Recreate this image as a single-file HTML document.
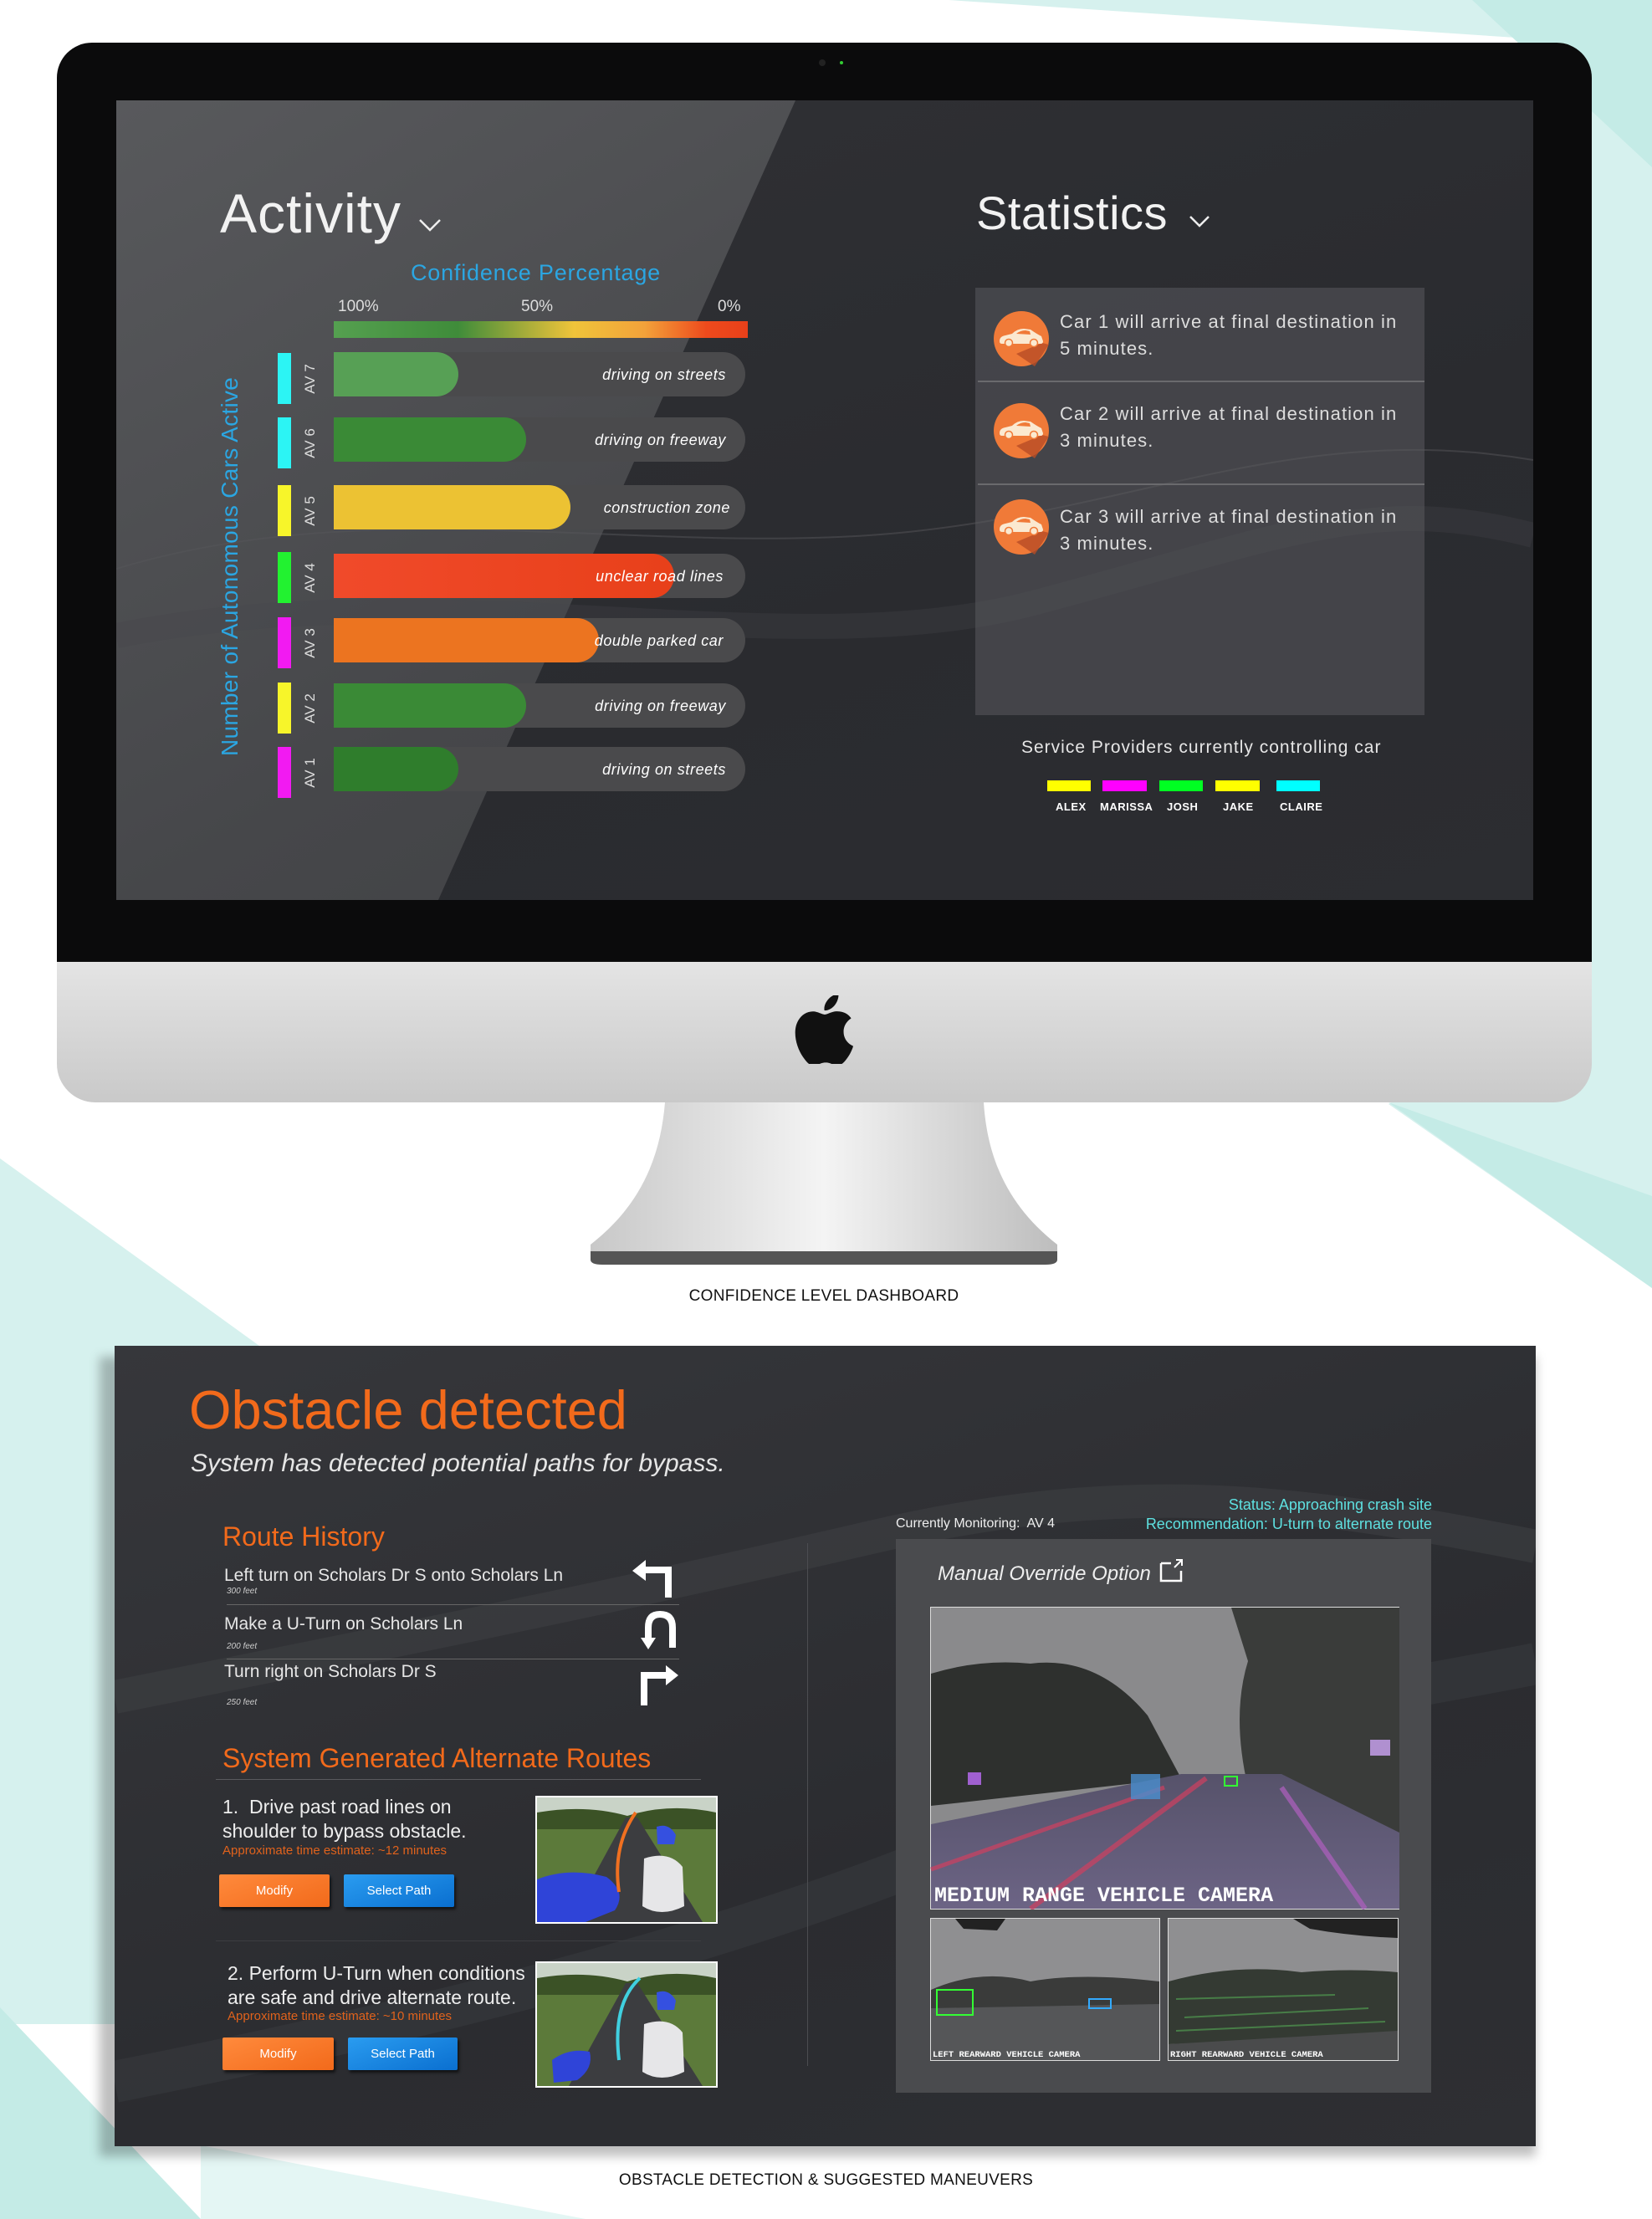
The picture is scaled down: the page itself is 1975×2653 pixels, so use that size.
<!DOCTYPE html>
<html><head><meta charset="utf-8">
<style>
*{margin:0;padding:0;box-sizing:border-box}
body{width:1975px;height:2653px;position:relative;background:#fff;font-family:"Liberation Sans",sans-serif;overflow:hidden}
.a{position:absolute}
.t{position:absolute;white-space:nowrap}
.bar{position:absolute;left:399px;width:492px;height:53px;background:#4a4a4c;border-radius:0 27px 27px 0}
.fill{position:absolute;left:0;top:0;height:53px;border-radius:0 27px 27px 0}
.lbl{position:absolute;right:23px;top:17px;color:#fff;font-style:italic;font-size:18px;letter-spacing:.6px}
.strip{position:absolute;left:332px;width:16px;height:61px}
.av{position:absolute;left:358px;width:26px;height:61px;color:#ddd;font-size:17px}
.av span{position:absolute;left:50%;top:50%;transform:translate(-50%,-50%) rotate(-90deg);white-space:nowrap}
.st{position:absolute;left:1267px;color:#ddd;font-size:22px;letter-spacing:1.1px;line-height:32px}
.circ{position:absolute;left:1188px;width:66px;height:66px;border-radius:50%;background:#f07a38;overflow:hidden}
.sw{position:absolute;top:933px;height:13px}
.nm{position:absolute;top:957px;color:#fff;font-weight:bold;font-size:13px;letter-spacing:.5px}
.btn{position:absolute;height:39px;color:#fff;font-size:15px;text-align:center;line-height:39px;border-radius:2px;box-shadow:2px 3px 3px rgba(0,0,0,.6)}
.or{background:linear-gradient(160deg,#ff8a3c,#f26a1b)}
.bl{background:linear-gradient(160deg,#2a9cf0,#0a6fd0)}
.rt{position:absolute;left:268px;color:#e6e6e6;font-size:21px}
.ft{position:absolute;left:271px;color:#ccc;font-size:10px;font-style:italic}
</style></head><body>
<svg class="a" style="left:0;top:0" width="1975" height="2653">
<polygon points="1134,0 1975,0 1975,1540 1660,1320 1903,1150 1903,51" fill="#d6f1ee"/>
<polygon points="1550,0 1975,0 1975,200 1760,0" fill="#c4ebe6"/>
<polygon points="1660,1318 1975,1430 1975,1540" fill="#c4ebe6"/>
<polygon points="0,1385 310,1609 137,1609 137,2420 0,2420" fill="#d6f1ee"/>
<polygon points="0,2400 240,2653 0,2653" fill="#c4ebe6"/>
<polygon points="240,2565 700,2653 240,2653" fill="#e4f6f4"/>
</svg>

<div class="a" style="left:68px;top:51px;width:1835px;height:1120px;background:#0b0b0c;border-radius:42px 42px 0 0"></div>
<div class="a" style="left:979px;top:71px;width:8px;height:8px;border-radius:50%;background:#222"></div>
<div class="a" style="left:1004px;top:73px;width:4px;height:4px;border-radius:50%;background:#3c3"></div>
<div class="a" style="left:68px;top:1150px;width:1835px;height:168px;background:linear-gradient(#e4e4e4,#c9c9c9);border-radius:0 0 46px 46px"></div>
<svg class="a" style="left:950px;top:1190px" width="72" height="82" viewBox="0 0 170 200">
<path fill="#111" d="M140 106c0-26 21-38 22-39-12-18-31-20-38-20-16-2-31 9-39 9s-21-9-34-9C33 47 17 57 8 73c-19 32-5 80 13 106 9 13 19 27 33 26 13-1 18-9 34-9s20 9 34 8c14 0 23-13 32-26 10-15 14-29 14-30 0 0-28-11-28-42zM114 29c7-9 12-21 11-33-10 0-23 7-30 16-7 8-13 20-11 32 11 1 23-6 30-15z"/>
</svg>
<svg class="a" style="left:700px;top:1318px" width="570" height="200">
<defs><linearGradient id="sg" x1="0" x2="1"><stop offset="0" stop-color="#c8c8c8"/><stop offset=".5" stop-color="#f4f4f4"/><stop offset="1" stop-color="#bdbdbd"/></linearGradient></defs>
<path d="M95 0 L476 0 C480 60 500 120 564 170 L564 185 Q564 192 550 192 L20 192 Q6 192 6 185 L6 170 C70 120 90 60 95 0Z" fill="url(#sg)"/>
<path d="M6 178 L564 178 L564 188 Q564 194 550 194 L20 194 Q6 194 6 188Z" fill="#555"/>
</svg>
<div class="t" style="left:0;width:1970px;text-align:center;top:1539px;font-size:19px;color:#111;letter-spacing:.3px">CONFIDENCE LEVEL DASHBOARD</div>

<div class="a" style="left:139px;top:120px;width:1694px;height:956px;background:linear-gradient(160deg,#303135,#2a2b2f 60%,#2c2d31);overflow:hidden">
<div class="a" style="left:0;top:0;width:1694px;height:956px;background:linear-gradient(150deg,#58595c,#46474a 50%,#3c3d40);clip-path:polygon(0 0,812px 0,385px 956px,0 956px)"></div>
<svg class="a" style="left:0;top:0" width="1694" height="956">
<path d="M0 560 C300 470 600 540 900 520 S1400 380 1694 430" stroke="#55565a" stroke-width="2" fill="none" opacity=".5"/>
<path d="M0 640 C400 560 800 680 1100 600 S1500 470 1694 520" stroke="#46474b" stroke-width="30" fill="none" opacity=".3"/>
</svg>
</div>
<div class="t" style="left:263px;top:217px;font-size:66px;color:#f2f2f2;letter-spacing:1px">Activity</div>
<svg class="a" style="left:500px;top:261px" width="28" height="17"><path d="M2 2 L14 14 L26 2" stroke="#eee" stroke-width="2.5" fill="none"/></svg>
<div class="t" style="left:491px;top:311px;font-size:27px;color:#2ba6e2;letter-spacing:.8px">Confidence Percentage</div>
<div class="t" style="left:404px;top:356px;font-size:19px;color:#ddd">100%</div>
<div class="t" style="left:623px;top:356px;font-size:19px;color:#ddd">50%</div>
<div class="t" style="left:858px;top:356px;font-size:19px;color:#ddd">0%</div>
<div class="a" style="left:399px;top:384px;width:495px;height:20px;background:linear-gradient(90deg,#55a050,#3f8c3a 30%,#f0c43a 58%,#f2a23a 75%,#ee4a1c 90%,#e8401a)"></div>
<div class="t" style="left:259px;top:904px;font-size:28px;color:#2ba6e2;transform:rotate(-90deg);transform-origin:0 0;letter-spacing:.3px">Number of Autonomous Cars Active</div>

<div class="strip" style="top:422px;background:#2cf4f4"></div><div class="av" style="top:422px"><span>AV 7</span></div>
<div class="bar" style="top:421px"><div class="fill" style="width:149px;background:#57a055"></div><div class="lbl">driving on streets</div></div>
<div class="strip" style="top:499px;background:#2cf4f4"></div><div class="av" style="top:499px"><span>AV 6</span></div>
<div class="bar" style="top:499px"><div class="fill" style="width:230px;background:#3a8a36"></div><div class="lbl">driving on freeway</div></div>
<div class="strip" style="top:580px;background:#f7f52a"></div><div class="av" style="top:580px"><span>AV 5</span></div>
<div class="bar" style="top:580px"><div class="fill" style="width:283px;background:#ecc233"></div><div class="lbl" style="right:18px">construction zone</div></div>
<div class="strip" style="top:660px;background:#22f230"></div><div class="av" style="top:660px"><span>AV 4</span></div>
<div class="bar" style="top:662px"><div class="fill" style="width:407px;background:linear-gradient(90deg,#f04a2a,#e8401a)"></div><div class="lbl" style="right:26px">unclear road lines</div></div>
<div class="strip" style="top:738px;background:#f21af2"></div><div class="av" style="top:738px"><span>AV 3</span></div>
<div class="bar" style="top:739px"><div class="fill" style="width:317px;background:#ec7420"></div><div class="lbl" style="right:26px">double parked car</div></div>
<div class="strip" style="top:816px;background:#f7f52a"></div><div class="av" style="top:816px"><span>AV 2</span></div>
<div class="bar" style="top:817px"><div class="fill" style="width:230px;background:#3a8a36"></div><div class="lbl">driving on freeway</div></div>
<div class="strip" style="top:893px;background:#f21af2"></div><div class="av" style="top:893px"><span>AV 1</span></div>
<div class="bar" style="top:893px"><div class="fill" style="width:149px;background:#2f7d2c"></div><div class="lbl">driving on streets</div></div>

<div class="t" style="left:1167px;top:222px;font-size:56px;color:#f2f2f2;letter-spacing:.5px">Statistics</div>
<svg class="a" style="left:1421px;top:257px" width="26" height="16"><path d="M2 2 L13 13 L24 2" stroke="#eee" stroke-width="2.5" fill="none"/></svg>
<div class="a" style="left:1166px;top:344px;width:537px;height:511px;background:rgba(90,90,94,.55)"></div>
<div class="a" style="left:1169px;top:455px;width:534px;height:2px;background:#6a6a6d"></div>
<div class="a" style="left:1169px;top:578px;width:534px;height:2px;background:#6a6a6d"></div>
<div class="circ" style="top:372px"></div><div class="circ" style="top:482px"></div><div class="circ" style="top:597px"></div>
<svg class="a" style="left:1188px;top:372px" width="66" height="300">
<defs><g id="car"><path d="M27 51 L49 66 L66 40 L58 38Z" fill="#b84c26" opacity=".8"/><path d="M7 36 Q7 30 14 29 L22 27 Q28 21 36 21 L44 22 Q51 27 57 30 L59 36 Q59 39 56 39 L10 39 Q7 39 7 36Z" fill="#fbe9d0"/><circle cx="18" cy="38" r="4.5" fill="#fbe9d0" stroke="#f07a38" stroke-width="1.5"/><circle cx="48" cy="38" r="4.5" fill="#fbe9d0" stroke="#f07a38" stroke-width="1.5"/><path d="M27 27 Q32 23 38 23 L43 24 L44 28Z" fill="#f07a38"/></g></defs>
<use href="#car"/><use href="#car" y="110"/><use href="#car" y="225"/>
</svg>
<div class="st" style="top:369px">Car 1 will arrive at final destination in<br>5 minutes.</div>
<div class="st" style="top:479px">Car 2 will arrive at final destination in<br>3 minutes.</div>
<div class="st" style="top:602px">Car 3 will arrive at final destination in<br>3 minutes.</div>
<div class="t" style="left:1221px;top:882px;font-size:21px;color:#e6e6e6;letter-spacing:1px">Service Providers currently controlling car</div>
<div class="sw" style="left:1252px;width:52px;background:#ff0"></div>
<div class="sw" style="left:1318px;width:53px;background:#f0f"></div>
<div class="sw" style="left:1386px;width:52px;background:#0f2"></div>
<div class="sw" style="left:1453px;width:53px;background:#ff0"></div>
<div class="sw" style="left:1526px;width:52px;background:#0ff"></div>
<div class="nm" style="left:1262px">ALEX</div><div class="nm" style="left:1315px">MARISSA</div><div class="nm" style="left:1395px">JOSH</div><div class="nm" style="left:1462px">JAKE</div><div class="nm" style="left:1530px">CLAIRE</div>

<div class="a" style="left:119px;top:1622px;width:1717px;height:956px;background:rgba(0,0,0,.25);filter:blur(6px)"></div>
<div class="a" style="left:137px;top:1609px;width:1699px;height:957px;background:linear-gradient(160deg,#36373b,#2b2c30 60%,#2e2f33);overflow:hidden">
<svg class="a" width="1699" height="957">
<path d="M0 420 C300 360 600 300 900 230 S1400 180 1699 240" stroke="#3e3f43" stroke-width="40" fill="none" opacity=".6"/>
<path d="M0 880 C400 800 800 700 1100 560 S1500 420 1699 380" stroke="#3a3b3f" stroke-width="50" fill="none" opacity=".5"/>
</svg>
</div>
<div class="t" style="left:226px;top:1648px;font-size:65px;color:#f26a1b">Obstacle detected</div>
<div class="t" style="left:228px;top:1733px;font-size:30px;color:#e6e6e6;font-style:italic">System has detected potential paths for bypass.</div>
<div class="a" style="left:965px;top:1845px;width:1px;height:625px;background:#4c4d51"></div>

<div class="t" style="left:266px;top:1819px;font-size:32px;color:#f26a1b">Route History</div>
<div class="rt" style="top:1872px">Left turn on Scholars Dr S onto Scholars Ln</div><div class="ft" style="top:1897px">300 feet</div>
<div class="a" style="left:271px;top:1918px;width:541px;height:1px;background:#666"></div>
<div class="rt" style="top:1930px">Make a U-Turn on Scholars Ln</div><div class="ft" style="top:1963px">200 feet</div>
<div class="a" style="left:271px;top:1983px;width:541px;height:1px;background:#666"></div>
<div class="rt" style="top:1987px">Turn right on Scholars Dr S</div><div class="ft" style="top:2030px">250 feet</div>
<svg class="a" style="left:756px;top:1862px" width="60" height="180" fill="#fff">
<path d="M0 16 L16 3 L16 11 L47 11 L47 48 L39 48 L39 19 L16 19 L16 28Z"/>
<path d="M15 108 L15 84 Q15 64 33 64 Q52 64 52 84 L52 108 L44 108 L44 84 Q44 72 33 72 Q23 72 23 84 L23 96 L28 96 L19 110 L10 96 L15 96Z"/>
<path d="M10 177 L10 137 L40 137 L40 129 L55 141 L40 153 L40 145 L18 145 L18 177Z"/>
</svg>

<div class="t" style="left:266px;top:2084px;font-size:32px;color:#f26a1b">System Generated Alternate Routes</div>
<div class="a" style="left:258px;top:2127px;width:580px;height:1px;background:#5a5a5e"></div>
<div class="t" style="left:266px;top:2146px;font-size:23px;color:#eee;line-height:29px">1.&nbsp; Drive past road lines on<br>shoulder to bypass obstacle.</div>
<div class="t" style="left:266px;top:2204px;font-size:15px;color:#e0621c">Approximate time estimate: ~12 minutes</div>
<div class="btn or" style="left:262px;top:2241px;width:132px">Modify</div>
<div class="btn bl" style="left:411px;top:2241px;width:132px">Select Path</div>
<div class="a" style="left:258px;top:2320px;width:580px;height:1px;background:#3c3d41"></div>
<div class="t" style="left:272px;top:2345px;font-size:23px;color:#eee;line-height:29px">2. Perform U-Turn when conditions<br>are safe and drive alternate route.</div>
<div class="t" style="left:272px;top:2402px;font-size:15px;color:#e0621c">Approximate time estimate: ~10 minutes</div>
<div class="btn or" style="left:266px;top:2436px;width:133px">Modify</div>
<div class="btn bl" style="left:416px;top:2436px;width:131px">Select Path</div>

<svg class="a" style="left:640px;top:2147px" width="218" height="153">
<rect width="218" height="153" fill="#fff"/>
<rect x="2" y="2" width="214" height="149" fill="#5c7a3a"/>
<rect x="2" y="2" width="214" height="30" fill="#c9d3c7"/>
<path d="M2 20 Q60 10 110 24 Q160 8 216 20 L216 40 L2 40Z" fill="#3b5226"/>
<path d="M108 26 L122 26 L200 151 L40 151Z" fill="#3c3d40"/>
<path d="M2 100 Q40 85 85 97 Q110 115 95 137 L60 151 L2 151Z" fill="#2f44d8"/>
<path d="M130 75 Q160 65 176 85 L178 132 Q150 146 128 132Z" fill="#e6e6e8"/>
<path d="M145 37 Q160 32 168 47 L166 58 L146 58Z" fill="#3550e0"/>
<path d="M100 115 Q92 60 120 20" stroke="#f07020" stroke-width="4" fill="none"/>
</svg>
<svg class="a" style="left:640px;top:2345px" width="218" height="151">
<rect width="218" height="151" fill="#fff"/>
<rect x="2" y="2" width="214" height="147" fill="#5c7a3a"/>
<rect x="2" y="2" width="214" height="28" fill="#c9d3c7"/>
<path d="M2 20 Q60 10 110 24 Q160 8 216 20 L216 40 L2 40Z" fill="#3b5226"/>
<path d="M108 26 L122 26 L200 149 L40 149Z" fill="#3c3d40"/>
<path d="M20 118 Q40 103 65 108 Q70 128 50 142 L22 145Z" fill="#2f44d8"/>
<path d="M130 75 Q160 65 176 85 L178 132 Q150 146 128 132Z" fill="#e6e6e8"/>
<path d="M145 37 Q160 32 168 47 L166 58 L146 58Z" fill="#3550e0"/>
<path d="M100 118 Q92 50 125 20" stroke="#40d0e0" stroke-width="4" fill="none"/>
</svg>

<div class="t" style="left:1071px;top:1813px;font-size:16px;color:#eee">Currently Monitoring:&nbsp; AV 4</div>
<div class="t" style="right:263px;top:1789px;font-size:18px;color:#5ee0e0;text-align:right">Status: Approaching crash site</div>
<div class="t" style="right:263px;top:1812px;font-size:18px;color:#5ee0e0;text-align:right">Recommendation: U-turn to alternate route</div>
<div class="a" style="left:1071px;top:1840px;width:640px;height:662px;background:#4a4b4e"></div>
<div class="t" style="left:1121px;top:1868px;font-size:24px;color:#eee;font-style:italic">Manual Override Option</div>
<svg class="a" style="left:1386px;top:1864px" width="30" height="28"><path d="M2 5 L2 26 L26 26 L26 14 M2 5 L14 5" stroke="#fff" stroke-width="2.5" fill="none"/><path d="M18 10 L27 1 M20 1 L27 1 L27 8" stroke="#fff" stroke-width="2" fill="none"/></svg>

<svg class="a" style="left:1112px;top:1921px" width="561" height="362">
<defs><linearGradient id="rd" x1="0" y1="0" x2="0" y2="1"><stop offset="0" stop-color="#56526a"/><stop offset="1" stop-color="#6c6485"/></linearGradient></defs>
<rect width="561" height="362" fill="#ddd"/>
<rect x="1" y="1" width="559" height="360" fill="#8a8a8c"/>
<path d="M1 80 Q60 62 120 68 Q200 58 260 130 L300 205 L1 238Z" fill="#2e302e"/>
<path d="M360 1 L561 1 L561 280 L380 216 Q360 130 380 65Z" fill="#3a3c3a"/>
<path d="M1 260 L300 200 L420 200 L561 270 L561 361 L1 361Z" fill="url(#rd)"/>
<path d="M1 314 L280 216" stroke="#d04060" stroke-width="5" opacity=".7"/>
<path d="M120 361 L330 205" stroke="#d04060" stroke-width="6" opacity=".7"/>
<path d="M420 216 L520 361" stroke="#b060c0" stroke-width="6" opacity=".7"/>
<rect x="240" y="200" width="35" height="30" fill="#4a8fd0" opacity=".8"/>
<rect x="352" y="203" width="15" height="11" fill="none" stroke="#3f3" stroke-width="2"/>
<rect x="45" y="198" width="16" height="15" fill="#a060d0"/>
<rect x="526" y="159" width="24" height="19" fill="#b090d0"/>
<text x="5" y="352" font-family="Liberation Mono,monospace" font-weight="bold" font-size="25" fill="#fff">MEDIUM RANGE VEHICLE CAMERA</text>
</svg>
<svg class="a" style="left:1112px;top:2293px" width="275" height="171">
<rect width="275" height="171" fill="#ddd"/>
<rect x="1" y="1" width="273" height="169" fill="#8f8f91"/>
<path d="M1 86 Q60 60 120 76 Q180 65 274 76 L274 108 L1 108Z" fill="#3a3b3a"/>
<path d="M1 108 L274 103 L274 170 L1 170Z" fill="#555658"/>
<path d="M30 1 L90 1 L80 15 L40 13Z" fill="#222"/>
<rect x="8" y="86" width="43" height="30" fill="none" stroke="#3f3" stroke-width="2"/>
<rect x="190" y="97" width="26" height="11" fill="none" stroke="#3af" stroke-width="2"/>
<text x="3" y="166" font-family="Liberation Mono,monospace" font-weight="bold" font-size="10.5" fill="#fff">LEFT REARWARD VEHICLE CAMERA</text>
</svg>
<svg class="a" style="left:1396px;top:2293px" width="276" height="171">
<rect width="276" height="171" fill="#ddd"/>
<rect x="1" y="1" width="274" height="169" fill="#8f8f91"/>
<path d="M1 76 Q80 54 160 65 Q220 60 275 65 L275 140 L1 151Z" fill="#343a33"/>
<path d="M1 151 L275 135 L275 170 L1 170Z" fill="#4a4b4c"/>
<path d="M150 1 L275 1 L275 24 Q220 22 170 13Z" fill="#222"/>
<path d="M10 97 L200 92 M20 119 L240 108 M10 135 L260 124" stroke="#5a5" stroke-width="2" opacity=".6"/>
<text x="3" y="166" font-family="Liberation Mono,monospace" font-weight="bold" font-size="10.5" fill="#fff">RIGHT REARWARD VEHICLE CAMERA</text>
</svg>

<div class="t" style="left:0;width:1975px;text-align:center;top:2596px;font-size:19px;color:#111;letter-spacing:.3px">OBSTACLE DETECTION &amp; SUGGESTED MANEUVERS</div>
</body></html>
